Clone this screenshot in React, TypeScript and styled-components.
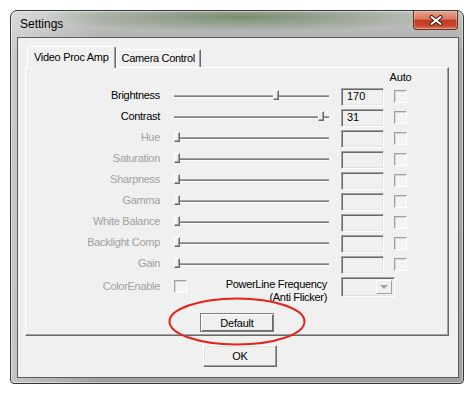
import React from 'react';
import styled, { createGlobalStyle } from 'styled-components';

const GlobalStyle = createGlobalStyle`
  html, body {
    margin: 0;
    padding: 0;
    background: #ffffff;
  }
  body {
    font-family: "Liberation Sans", Arial, sans-serif;
    font-size: 11px;
    color: #000;
  }
`;

const Page = styled.div`
  position: relative;
  width: 476px;
  height: 396px;
  box-sizing: border-box;
  padding: 10px 0 0 10px;
  overflow: hidden;
`;

const Window = styled.div`
  box-sizing: border-box;
  width: 454px;
  height: 374px;
  display: flex;
  flex-direction: column;
  border: 1px solid #353835;
  border-radius: 7px 7px 4px 4px;
  background:
    radial-gradient(ellipse 200px 15px at 230px 6px, rgba(100, 124, 86, 0.75), rgba(100, 124, 86, 0) 100%),
    linear-gradient(90deg, rgba(255, 255, 255, 0.4) 0px, rgba(255, 255, 255, 0) 90px),
    linear-gradient(180deg, #c2c5c2 0px, #b2b5b2 26px, #a6a8a6 40px, #9ea09e 100%);
  box-shadow: inset 0 0 0 1px rgba(255, 255, 255, 0.45);
`;

const TitleBar = styled.div`
  height: 26px;
  flex: none;
  display: flex;
  align-items: center;
  padding-left: 9px;
`;

const Title = styled.span`
  font-size: 12px;
  color: #000;
`;

const CloseButton = styled.div`
  margin-left: auto;
  margin-right: 5px;
  align-self: flex-start;
  box-sizing: border-box;
  width: 45px;
  height: 19px;
  display: flex;
  align-items: center;
  justify-content: center;
  border: 1px solid #6b2c20;
  border-top: none;
  border-radius: 0 0 4px 4px;
  background: linear-gradient(180deg, #e8a28d 0%, #d9775f 45%, #c13c22 52%, #c8452a 80%, #de7a5c 100%);
  box-shadow: inset 0 0 0 1px rgba(255, 255, 255, 0.3);
`;

const Client = styled.div`
  flex: 1;
  margin: 0 4px 5px 6px;
  border: 1px solid #5b5e5b;
  background: #f0f0f0;
  padding: 8px 9px 0 7px;
  display: flex;
  flex-direction: column;
`;

const TabRow = styled.div`
  height: 21px;
  display: flex;
  align-items: flex-end;
  padding-left: 2px;
`;

const Tab = styled.div<{ $active?: boolean }>`
  position: relative;
  z-index: ${(p) => (p.$active ? 1 : 0)};
  box-sizing: border-box;
  height: ${(p) => (p.$active ? '22px' : '18px')};
  margin-bottom: ${(p) => (p.$active ? '-1px' : '0')};
  padding: ${(p) => (p.$active ? '3px 7px 0 6px' : '1px 5px 0 4px')};
  background: #f0f0f0;
  border-top: 1px solid #ffffff;
  border-left: 1px solid #ffffff;
  border-right: 1px solid #696969;
  box-shadow: inset -1px 0 0 #a0a0a0;
  border-radius: 2px 2px 0 0;
  line-height: 14px;
  letter-spacing: -0.3px;
  white-space: nowrap;
`;

const Panel = styled.div`
  box-sizing: border-box;
  height: 269px;
  border: 1px solid;
  border-color: #ffffff #696969 #696969 #ffffff;
  box-shadow: inset -1px -1px 0 #a0a0a0;
  padding-bottom: 3px;
  display: flex;
  flex-direction: column;
`;

const Grid = styled.div`
  display: grid;
  grid-template-columns: 148px 167px 53px 13px;
  grid-template-rows: 18px repeat(9, 21px) 30px;
  align-items: center;
`;

const Label = styled.div<{ $disabled?: boolean }>`
  grid-column: 1;
  padding-right: 14px;
  padding-bottom: 4px;
  text-align: right;
  white-space: nowrap;
  letter-spacing: -0.3px;
  color: ${(p) => (p.$disabled ? '#a0a0a0' : '#000')};
`;

const AutoHead = styled.div`
  grid-column: 4;
  grid-row: 1;
  justify-self: center;
  white-space: nowrap;
  letter-spacing: -0.2px;
`;

const Slider = styled.div`
  position: relative;
  width: 155px;
  height: 21px;
  display: flex;
  align-items: center;
  padding-bottom: 2px;
  box-sizing: border-box;
`;

const Track = styled.div`
  width: 100%;
  height: 1px;
  border-top: 1px solid #a0a0a0;
  background: #808080;
  box-shadow: 0 1px 0 #ffffff;
`;

const Thumb = styled.div`
  position: absolute;
  top: 4px;
  box-sizing: border-box;
  width: 6px;
  height: 10px;
  background: #f0f0f0;
  border: 1px solid;
  border-color: #ffffff #696969 #696969 #ffffff;
  box-shadow: inset -1px -1px 0 #a0a0a0;
`;

const TextBox = styled.div`
  box-sizing: border-box;
  width: 43px;
  height: 18px;
  padding-left: 5px;
  line-height: 15px;
  background: #f0f0f0;
  border: 1px solid;
  border-color: #a0a0a0 #ffffff #ffffff #a0a0a0;
  box-shadow: inset 1px 1px 0 #696969, inset -1px -1px 0 #e3e3e3;
`;

const Check = styled.div<{ $top?: number }>`
  box-sizing: border-box;
  width: 13px;
  height: 13px;
  flex: none;
  margin-top: ${(p) => p.$top ?? 0}px;
  background: #f4f4f4;
  border: 1px solid;
  border-color: #a0a0a0 #ffffff #ffffff #a0a0a0;
  box-shadow: inset 1px 1px 0 #d8d8d8;
`;

const BottomLabel = styled(Label)`
  align-self: start;
  margin-top: 5px;
  padding-bottom: 0;
  line-height: 13px;
`;

const BottomCell = styled.div`
  grid-column: 2;
  align-self: start;
  display: flex;
  align-items: flex-start;
`;

const PowerText = styled.div`
  flex: 1;
  margin-top: 3px;
  padding-right: 14px;
  line-height: 13px;
  text-align: right;
  white-space: nowrap;
  letter-spacing: -0.3px;
`;

const Combo = styled.div`
  grid-column: 3 / span 2;
  align-self: start;
  margin-top: 2px;
  box-sizing: border-box;
  width: 54px;
  height: 20px;
  display: flex;
  justify-content: flex-end;
  padding: 2px;
  background: #f0f0f0;
  border: 1px solid;
  border-color: #a0a0a0 #ffffff #ffffff #a0a0a0;
  box-shadow: inset 1px 1px 0 #696969, inset -1px -1px 0 #e3e3e3;
`;

const DropButton = styled.div`
  box-sizing: border-box;
  width: 16px;
  height: 14px;
  display: flex;
  align-items: center;
  justify-content: center;
  background: #f0f0f0;
  border: 1px solid;
  border-color: #ffffff #a0a0a0 #a0a0a0 #ffffff;

  &::after {
    content: '';
    border-left: 4px solid transparent;
    border-right: 4px solid transparent;
    border-top: 4px solid #a0a0a0;
  }
`;

const ButtonRow = styled.div`
  margin-top: 8px;
  display: flex;
  justify-content: center;
`;

const Button = styled.div<{ $h: number; $outlined?: boolean }>`
  box-sizing: border-box;
  width: 74px;
  height: ${(p) => p.$h}px;
  display: flex;
  align-items: center;
  justify-content: center;
  background: #f0f0f0;
  border: 1px solid;
  border-color: ${(p) => (p.$outlined ? '#808080' : '#ffffff #696969 #696969 #ffffff')};
  box-shadow: ${(p) =>
    p.$outlined
      ? 'inset 1px 1px 0 #ffffff, inset -1px -1px 0 #696969'
      : 'inset -1px -1px 0 #a0a0a0, inset 1px 1px 0 #e3e3e3'};
  letter-spacing: -0.2px;
`;

const Footer = styled.div`
  flex: 1;
  display: flex;
  justify-content: center;
  align-items: flex-start;
  padding: 9px 0 0 6px;
`;

const Annotation = styled.svg`
  position: absolute;
  top: 0;
  left: 0;
  pointer-events: none;
`;

type Row = { name: string; value?: number; max?: number; enabled?: boolean };

const rows: Row[] = [
  { name: 'Brightness', value: 170, max: 255, enabled: true },
  { name: 'Contrast', value: 31, max: 32, enabled: true },
  { name: 'Hue' },
  { name: 'Saturation' },
  { name: 'Sharpness' },
  { name: 'Gamma' },
  { name: 'White Balance' },
  { name: 'Backlight Comp' },
  { name: 'Gain' },
];

const App = () => {
  return (
    <Page>
      <GlobalStyle />
      <Window>
        <TitleBar>
          <Title>Settings</Title>
          <CloseButton>
            <svg width="14" height="11" viewBox="0 0 14 11">
              <path d="M2.5 2 L11.5 9 M11.5 2 L2.5 9" stroke="#3b1a12" strokeWidth="4" strokeLinecap="round" />
              <path d="M2.5 2 L11.5 9 M11.5 2 L2.5 9" stroke="#ffffff" strokeWidth="2" strokeLinecap="round" />
            </svg>
          </CloseButton>
        </TitleBar>
        <Client>
          <TabRow>
            <Tab $active>Video Proc Amp</Tab>
            <Tab>Camera Control</Tab>
          </TabRow>
          <Panel>
            <Grid>
              <AutoHead>Auto</AutoHead>
              {rows.map((r, i) => {
                const pos = r.value && r.max ? Math.round((r.value / r.max) * 149) : 0;
                return (
                  <React.Fragment key={r.name}>
                    <Label $disabled={!r.enabled} style={{ gridRow: i + 2 }}>
                      {r.name}
                    </Label>
                    <Slider style={{ gridRow: i + 2, gridColumn: 2 }}>
                      <Track />
                      <Thumb style={{ left: pos }} />
                    </Slider>
                    <TextBox style={{ gridRow: i + 2, gridColumn: 3 }}>{r.value ?? ''}</TextBox>
                    <Check style={{ gridRow: i + 2, gridColumn: 4 }} />
                  </React.Fragment>
                );
              })}
              <BottomLabel $disabled style={{ gridRow: 11 }}>
                ColorEnable
              </BottomLabel>
              <BottomCell style={{ gridRow: 11 }}>
                <Check $top={5} />
                <PowerText>
                  PowerLine Frequency
                  <br />
                  (Anti Flicker)
                </PowerText>
              </BottomCell>
              <Combo style={{ gridRow: 11 }}>
                <DropButton />
              </Combo>
            </Grid>
            <ButtonRow>
              <Button $h={19} $outlined>
                Default
              </Button>
            </ButtonRow>
          </Panel>
          <Footer>
            <Button $h={22}>OK</Button>
          </Footer>
        </Client>
      </Window>
      <Annotation width="476" height="396" viewBox="0 0 476 396">
        <ellipse cx="237" cy="321.5" rx="67.5" ry="23" fill="none" stroke="#e8211b" strokeWidth="2" />
      </Annotation>
    </Page>
  );
};

export default App;
